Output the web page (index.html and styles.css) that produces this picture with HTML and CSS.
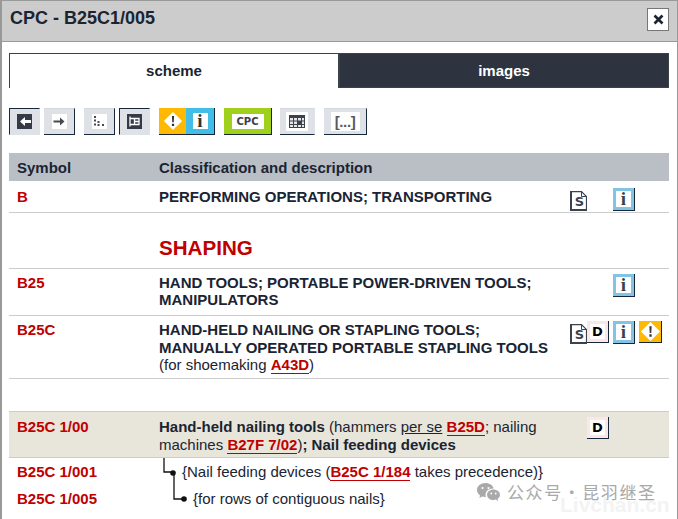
FILE: index.html
```html
<!DOCTYPE html>
<html lang="en">
<head>
<meta charset="utf-8">
<title>CPC - B25C1/005</title>
<link rel="stylesheet" href="styles.css">
</head>
<body>
<div class="dialog">
  <header class="titlebar">
    <h1 class="title">CPC - B25C1/005</h1>
    <button class="close" aria-label="Close">
      <svg width="11" height="11" viewBox="0 0 11 11"><path d="M1.500 1.500l8 8M9.500 1.500l-8 8" stroke="#1b2430" stroke-width="2.600" fill="none"/></svg>
    </button>
  </header>
  <main class="content">
    <nav class="tabs">
      <div class="tab tab-on">scheme</div>
      <div class="tab tab-off">images</div>
    </nav>
    <div class="toolbar">
      <span class="tb tb-on tb-31"><span class="face dark"><svg width="14" height="15" viewBox="0 0 14 15"><path d="M2 7.500L7 3v3h6v3H7v3z" fill="#fff"/></svg></span></span>
      <span class="tb tb-31 m4"><span class="face"><svg width="14" height="15" viewBox="0 0 14 15"><path d="M12.500 7.500L8 3.500v3H1.500v2H8v3z" fill="#444a52"/></svg></span></span>
      <span class="tb tb-31 m9"><span class="face"><svg width="14" height="15" viewBox="0 0 14 15"><path d="M2 2h2v2H2zM2 5.500h2v2H2zM5.500 7h2v2h-2zM2 9.500h2v2H2zM5.500 10h2v2h-2zM10 10h2v2h-2z" fill="#444a52"/></svg></span></span>
      <span class="tb tb-on tb-31 m4"><span class="face dark"><svg width="15" height="15" viewBox="0 0 15 15"><path d="M3 2.500v10M3 4.500h9v6H3M7.500 7.500H12M7.500 4.500v6" stroke="#fff" stroke-width="1.300" fill="none"/></svg></span></span>
      <span class="tb-pair m9">
        <span class="pair-warn"><svg width="20" height="20" viewBox="0 0 22 22"><path d="M11 1l10 10-10 10L1 11z" fill="#fff"/><path d="M9.800 5.500h2.400l-.4 7h-1.600zM9.800 14h2.400v2.400H9.800z" fill="#333"/></svg></span>
        <span class="pair-info"><span class="i-face">i</span></span>
      </span>
      <span class="tb-cpc m9"><span class="cpc-face">CPC</span></span>
      <span class="tb tb-35 m8"><span class="face"><svg width="16" height="13" viewBox="0 0 16 13"><path d="M0 0h16v13H0z" fill="#3c424b"/><path d="M1 3h3v2.500H1zM5 3h3v2.500H5zM9 3h3v2.500H9zM13 3h2v2.500h-2zM1 6.500h3V9H1zM5 6.500h3V9H5zM13 6.500h2V9h-2zM1 10h3v2H1zM5 10h3v2H5zM9 10h3v2H9zM13 10h2v2h-2z" fill="#e4e6ea"/></svg></span></span>
      <span class="tb tb-43 m9"><span class="face wide">[...]</span></span>
    </div>

    <section class="scheme">
      <div class="head row-grid">
        <div>Symbol</div>
        <div>Classification and description</div>
      </div>

      <div class="row row-grid r-b">
        <div class="sym">B</div>
        <div class="desc strong">PERFORMING OPERATIONS; TRANSPORTING</div>
        <div class="icons">
          <span class="ic-s slot-s"><svg class="doc" width="17" height="20" viewBox="0 0 17 20"><path d="M1 .600h10.500l5 5V19H1z" fill="#fff" stroke="#39424d" stroke-width="1.200"/><path d="M0 0h2v20H0zM0 18h17v2H0z" fill="#39424d"/><path d="M11.500.500v5h5" fill="none" stroke="#39424d"/></svg><span class="s-l">S</span></span>
          <span class="ic-i slot-i"><span>i</span></span>
        </div>
      </div>

      <div class="row row-grid r-shaping">
        <div></div>
        <div class="shaping">SHAPING</div>
      </div>

      <div class="row row-grid r-25">
        <div class="sym">B25</div>
        <div class="desc strong">HAND TOOLS; PORTABLE POWER-DRIVEN TOOLS; MANIPULATORS</div>
        <div class="icons">
          <span class="ic-i slot-i"><span>i</span></span>
        </div>
      </div>

      <div class="row row-grid r-25c">
        <div class="sym">B25C</div>
        <div class="desc"><b>HAND-HELD NAILING OR STAPLING TOOLS; MANUALLY OPERATED PORTABLE STAPLING TOOLS</b><br>(for shoemaking <a class="ref">A43D</a>)</div>
        <div class="icons">
          <span class="ic-s slot-s"><svg class="doc" width="17" height="20" viewBox="0 0 17 20"><path d="M1 .600h10.500l5 5V19H1z" fill="#fff" stroke="#39424d" stroke-width="1.200"/><path d="M0 0h2v20H0zM0 18h17v2H0z" fill="#39424d"/><path d="M11.500.500v5h5" fill="none" stroke="#39424d"/></svg><span class="s-l">S</span></span>
          <span class="ic-d slot-d">D</span>
          <span class="ic-i slot-i"><span>i</span></span>
          <span class="ic-w slot-w"><svg width="21" height="21" viewBox="0 0 22 22"><path d="M11 1l10 10-10 10L1 11z" fill="#fff"/><path d="M9.800 5.500h2.400l-.4 7h-1.600zM9.800 14h2.400v2.400H9.800z" fill="#333"/></svg></span>
        </div>
      </div>

      <div class="row row-grid r-main">
        <div class="sym">B25C 1/00</div>
        <div class="desc"><b>Hand-held nailing tools</b> (hammers <u>per se</u> <a class="ref">B25D</a>; nailing machines <a class="ref">B27F 7/02</a>)<b>; Nail feeding devices</b></div>
        <div class="icons">
          <span class="ic-d slot-d">D</span>
        </div>
      </div>

      <div class="tree">
        <svg class="tree-lines" width="30" height="47" viewBox="0 0 30 47"><path d="M5 0v14h9M15 14v27h9" stroke="#111" stroke-width="1.300" fill="none"/><circle cx="14" cy="15" r="2.800" fill="#111"/><circle cx="25" cy="41" r="2.800" fill="#111"/></svg>
        <div class="row-grid t1">
          <div class="sym">B25C 1/001</div>
          <div class="desc ind1">{Nail feeding devices (<a class="ref">B25C 1/184</a> takes precedence)}</div>
        </div>
        <div class="row-grid t2">
          <div class="sym">B25C 1/005</div>
          <div class="desc ind2">{for rows of contiguous nails}</div>
        </div>
      </div>
    </section>
  </main>
  <div class="watermark">
    <svg width="25" height="20" viewBox="0 0 25 20"><path d="M9.500 1C4.800 1 1 4.100 1 8c0 2.200 1.200 4.100 3.100 5.400L3.300 16l3-1.500c1 .3 2 .5 3.200.5h.5c-.3-.7-.5-1.500-.5-2.300 0-3.500 3.300-6.300 7.500-6.300h.6C16.800 3.300 13.500 1 9.500 1z" fill="#a9a9a9"/><path d="M24 12.700c0-3-3-5.300-6.500-5.300S11 9.700 11 12.700s3 5.300 6.500 5.300c.8 0 1.600-.1 2.300-.4l2.400 1.300-.6-2.200c1.500-1 2.400-2.400 2.400-4z" fill="#a9a9a9"/><circle cx="6.500" cy="6" r="1.100" fill="#fff"/><circle cx="12.500" cy="6" r="1.100" fill="#fff"/><circle cx="15.300" cy="11.500" r=".9" fill="#fff"/><circle cx="19.700" cy="11.500" r=".9" fill="#fff"/></svg>
    <span class="wm-text">公众号 · 昆羽继圣</span>
    <span class="wm-faint">Livchan.cn</span>
  </div>
</div>
</body>
</html>
```
FILE: styles.css
```css
* { box-sizing: border-box; }
html, body { margin: 0; padding: 0; background: #fff; }
body {
  width: 678px;
  height: 519px;
  overflow: hidden;
  font-family: "Liberation Sans", Arial, sans-serif;
  color: #1a2433;
}
.dialog {
  position: relative;
  width: 678px;
  height: 519px;
  overflow: hidden;
  border-top: 1px solid #999;
  border-left: 2px solid #999;
  border-right: 1px solid #999;
}
.titlebar {
  height: 41px;
  background: #ccc;
  border-bottom: 1px solid #999;
  display: flex;
  align-items: center;
  justify-content: space-between;
  padding: 0 8px 3px 8px;
}
.title {
  margin: 0 0 2px;
  font-size: 18px;
  font-weight: bold;
  color: #1a2433;
}
.close {
  width: 22px;
  height: 23px;
  padding: 0;
  background: #fff;
  border: 1px solid #777;
  border-radius: 0;
  display: flex;
  align-items: center;
  justify-content: center;
}
.content { padding: 11px 7px 0 7px; }
.tabs { display: flex; height: 35px; }
.tab {
  width: 330px;
  display: flex;
  align-items: center;
  justify-content: center;
  font-size: 15px;
  font-weight: bold;
  padding-bottom: 1px;
}
.tab-on {
  background: #fff;
  border: 1px solid #3a424d;
  border-bottom: 0;
  color: #1a2433;
}
.tab-off {
  background: #2d3440;
  border: 1px solid #3a424d;
  color: #fff;
}
.toolbar { display: flex; margin-top: 20px; height: 27px; }
.m4 { margin-left: 4px; }
.m8 { margin-left: 8px; }
.m9 { margin-left: 9px; }
.tb {
  display: flex;
  align-items: center;
  justify-content: center;
  height: 27px;
  background: #dee1e6;
  border-top: 1px solid #d4d8de;
  border-right: 1px solid #17263a;
  border-bottom: 1px solid #17263a;
}
.tb-on {
  border-top: 1px solid #17263a;
  border-left: 1px solid #17263a;
  border-right: 1px solid #dee1e6;
  border-bottom: 1px solid #dee1e6;
}
.tb-31 { width: 31px; }
.tb-35 { width: 35px; border-right-color: #dee1e6; }
.tb-43 { width: 43px; }
.face {
  display: flex;
  align-items: center;
  justify-content: center;
  width: 15px;
  height: 15px;
  background: #fff;
}
.face.dark { background: #343b47; }
.face svg { display: block; flex: none; }
.tb-35 .face { width: 22px; height: 19px; }
.face.wide {
  width: 29px;
  height: 19px;
  font-size: 15px;
  font-weight: bold;
  color: #555b63;
  letter-spacing: -.4px;
  line-height: 17px;
}
.tb-pair {
  display: flex;
  height: 27px;
  width: 56px;
  border-bottom: 1px solid #17263a;
  border-right: 1px solid #17263a;
}
.pair-warn {
  width: 27px;
  background: #ffb900;
  display: flex;
  align-items: center;
  justify-content: center;
}
.pair-info {
  flex: 1;
  background: #41bde6;
  display: flex;
  align-items: center;
  justify-content: center;
}
.i-face {
  display: block;
  width: 15px;
  height: 16px;
  background: #fff;
  color: #333;
  font: bold 19px/15px "Liberation Serif", serif;
  text-align: center;
}
.tb-cpc {
  width: 48px;
  height: 27px;
  background: #9ed01c;
  border-right: 1px solid #17263a;
  border-bottom: 1px solid #17263a;
  display: flex;
  align-items: center;
  justify-content: center;
}
.cpc-face {
  width: 32px;
  height: 15px;
  background: #fff;
  color: #3a4048;
  font-family: "DejaVu Sans", sans-serif;
  font-size: 10px;
  font-weight: bold;
  line-height: 15px;
  text-align: center;
}
.scheme { margin-top: 18px; width: 660px; }
.row-grid {
  display: grid;
  grid-template-columns: 150px 400px 1fr;
}
.head {
  height: 28px;
  align-items: end;
  padding: 0 0 5px 8px;
  background: #b9bfc5;
  font-size: 15px;
  font-weight: bold;
  color: #1a2433;
  grid-template-columns: 142px 1fr;
}
.row {
  font-size: 15px;
  line-height: 17px;
  padding-left: 8px;
  grid-template-columns: 142px 410px 1fr;
  border-bottom: 1px solid #ccc;
}
.r-b { height: 32px; padding-top: 7px; }
.r-b .icons { margin-top: 0; }
.r-shaping { height: 56px; padding-top: 22px; }
.r-25 { height: 47px; padding-top: 5px; }
.r-25 .icons { margin-top: 0; }
.r-25c { height: 63px; padding-top: 5px; line-height: 17.500px; }
.r-25c .icons { margin-top: 0; }
.r-25c .desc, .r-25 .desc { padding-right: 12px; }
.r-main {
  height: 47px;
  padding-top: 6px;
  margin-top: 32px;
  background: #e8e6da;
  border-top: 1px solid #ccc;
  border-bottom: 1px solid #ccc;
  line-height: 18px;
}
.sym { color: #c00000; font-weight: bold; font-size: 15px; }
.desc { color: #1a2433; }
.strong { font-weight: bold; }
.shaping { color: #c00000; font-size: 20.600px; font-weight: bold; line-height: 24px; padding-top: 1px; }
.ref {
  color: #c00000;
  font-weight: bold;
  border-bottom: 1px solid #c00000;
}
.icons {
  display: grid;
  grid-template-columns: 18px 21px 4px 23px 3px 25px;
  grid-template-rows: 22px;
  margin-top: -1px;
  padding-left: 1px;
}
.slot-s { grid-column: 1; grid-row: 1; }
.slot-d { grid-column: 2; grid-row: 1; margin-left: -1px; }
.slot-i { grid-column: 4; grid-row: 1; }
.slot-w { grid-column: 6; grid-row: 1; }
.ic-s {
  position: relative;
  display: block;
  width: 17px;
  height: 20px;
  margin-top: 3px;
}
.doc { position: absolute; left: 0; top: 0; }
.s-l {
  position: absolute;
  left: 1px;
  top: 3px;
  width: 17px;
  color: #39424d;
  font-family: "DejaVu Sans", sans-serif;
  font-size: 13px;
  font-weight: bold;
  line-height: 15px;
  text-align: center;
}
.ic-d {
  width: 22px;
  height: 22px;
  background: #fff;
  box-shadow: inset 0 0 0 3px #fde6e6;
  border-right: 1px solid #17263a;
  border-bottom: 1px solid #17263a;
  color: #000;
  font-family: "DejaVu Sans", sans-serif;
  font-size: 13px;
  font-weight: bold;
  line-height: 21px;
  text-align: center;
}
.ic-i {
  width: 22px;
  height: 23px;
  background: #82c4e4;
  border-right: 1px solid #17263a;
  border-bottom: 1px solid #17263a;
  display: flex;
  align-items: center;
  justify-content: center;
}
.ic-i span {
  display: block;
  width: 15px;
  height: 16px;
  background: #fff;
  color: #39424d;
  font: bold 19px/15px "Liberation Serif", serif;
  text-align: center;
}
.ic-w {
  width: 23px;
  height: 22px;
  background: #ffb900;
  border-right: 1px solid #17263a;
  border-bottom: 1px solid #17263a;
  display: flex;
  align-items: center;
  justify-content: center;
}
.ic-w svg { display: block; }
.tree { position: relative; font-size: 15px; line-height: 17px; padding-left: 8px; }
.tree .row-grid { grid-template-columns: 142px 1fr; }
.t1 { padding-top: 5px; height: 27px; }
.t2 { padding-top: 5px; height: 28px; }
.ind1 { padding-left: 23px; }
.ind2 { padding-left: 34px; }
.tree-lines { position: absolute; left: 150px; top: 0; }
.watermark {
  position: absolute;
  left: 474px;
  top: 481px;
  width: 202px;
  display: flex;
  align-items: center;
  gap: 6px;
  color: #a9a9a9;
}
.wm-text {
  font: 17px/20px "Noto Sans CJK SC", sans-serif;
  letter-spacing: 1.600px;
  word-spacing: -5px;
  white-space: nowrap;
}
.wm-faint {
  position: absolute;
  left: 84px;
  top: 11px;
  font-size: 21px;
  font-weight: bold;
  color: #f3f3f3;
  white-space: nowrap;
}
```
